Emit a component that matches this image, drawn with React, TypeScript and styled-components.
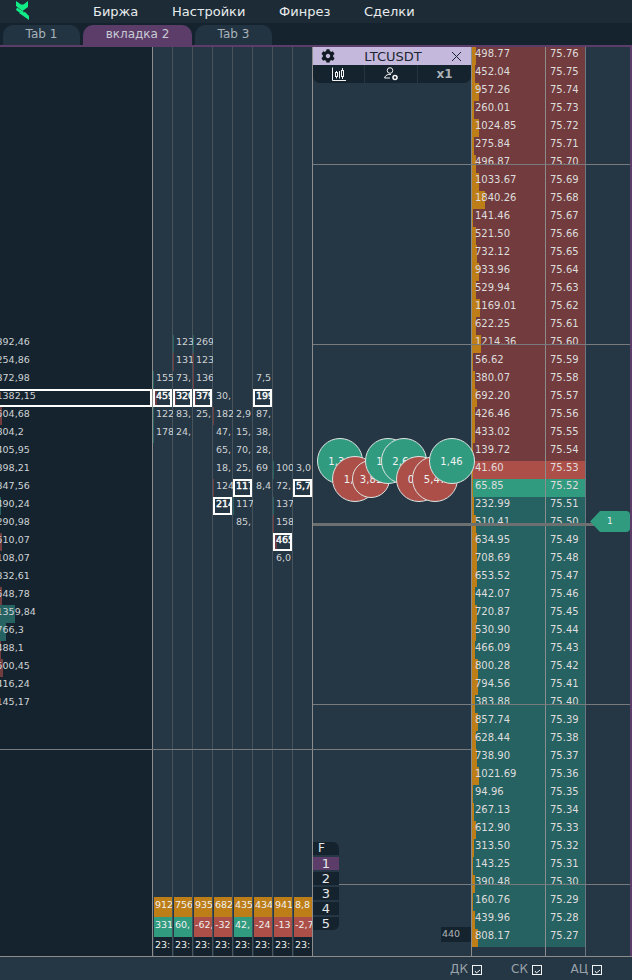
import React from "react";
import styled, { createGlobalStyle } from "styled-components";
import { FaCog } from "react-icons/fa";

const GlobalStyle = createGlobalStyle`
  html, body {
    margin: 0;
    padding: 0;
    background: #15232e;
    overflow: hidden;
  }
  * {
    box-sizing: border-box;
  }
`;

const RED = "#723c3f";
const TEAL = "#266262";
const HOT_RED = "#ad4f49";
const HOT_GREEN = "#319b80";
const ORANGE = "#bd7d17";
const PANEL = "#253644";
const DARK = "#15232e";
const PURPLE = "#5c3d6a";

const Screen = styled.div`
  width: 632px;
  height: 980px;
  display: flex;
  flex-direction: column;
  font-family: "DejaVu Sans", sans-serif;
  font-size: 10px;
  color: #cfd3d5;
`;

const TopBar = styled.div`
  height: 23px;
  flex: none;
  background: #1c2b36;
  display: flex;
  align-items: center;
  padding-left: 16px;
`;

const Logo = styled.svg`
  width: 13px;
  height: 19px;
  margin-right: 64px;
  margin-top: -2px;
`;

const MenuItem = styled.div<{ $w: number }>`
  width: ${(p) => p.$w}px;
  font-size: 13px;
  color: #e8ebed;
  white-space: nowrap;
`;

const TabStrip = styled.div`
  height: 24px;
  flex: none;
  background: ${DARK};
  border-bottom: 2px solid ${PURPLE};
  display: flex;
  gap: 3px;
  padding: 2px 0 0 3px;
`;

const Tab = styled.div<{ $active?: boolean; $w: number }>`
  width: ${(p) => p.$w}px;
  border-radius: 10px 10px 0 0;
  background: ${(p) => (p.$active ? PURPLE : "#223442")};
  color: ${(p) => (p.$active ? "#c8cbd4" : "#a9b2b9")};
  font-size: 12px;
  line-height: 18px;
  text-align: center;
`;

const Main = styled.div`
  position: relative;
  height: 909px;
  flex: none;
  display: flex;
  background: ${PANEL};
  border-right: 2px solid ${PURPLE};
  overflow: hidden;
`;

const LeftPanel = styled.div`
  width: 153px;
  flex: none;
  background: ${DARK};
  border-right: 1px solid #8c8c8c;
  padding-top: 288px;
  font-size: 9.5px;
  overflow: hidden;
`;

const LeftRow = styled.div<{ $boxed?: boolean }>`
  position: relative;
  height: 18px;
  line-height: 13px;
  text-indent: -3.5px;
  white-space: nowrap;
  ${(p) =>
    p.$boxed
      ? `
    border: 2px solid #fff;
    border-left: 0;
    line-height: 9px;
  `
      : ""}
`;

const LeftRowText = styled.span`
  position: relative;
`;

const LeftBar = styled.div<{ $w: number; $color: string }>`
  position: absolute;
  left: 0;
  top: 0;
  bottom: 0;
  width: ${(p) => p.$w}px;
  background: ${(p) => p.$color};
`;

const Column = styled.div<{ $last?: boolean }>`
  width: 20px;
  flex: none;
  display: flex;
  flex-direction: column;
  padding-top: 288px;
  font-size: 9.5px;
  border-right: 1px solid ${(p) => (p.$last ? "#8c8c8c" : "#47535d")};
`;

const Cell = styled.div<{ $boxed?: boolean }>`
  position: relative;
  height: 18px;
  flex: none;
  overflow: hidden;
  white-space: nowrap;
  padding-left: 3px;
  line-height: 13px;
  margin-right: -1px;
  ${(p) =>
    p.$boxed
      ? `
    border: 2px solid #fff;
    margin-right: 0;
    padding-left: 1px;
    line-height: 9px;
    color: #fff;
    -webkit-text-stroke: 0.4px #fff;
  `
      : ""}
`;

const CellText = styled.span`
  position: relative;
`;

const CellBar = styled.div<{ $w: number; $color: string }>`
  position: absolute;
  left: 0;
  top: 0;
  bottom: 0;
  width: ${(p) => p.$w}px;
  background: ${(p) => p.$color};
`;

const Summary = styled.div`
  margin-top: auto;
  display: flex;
  flex-direction: column;
  padding-left: 1px;
`;

const SummaryCell = styled.div<{ $bg: string; $h: number }>`
  height: ${(p) => p.$h}px;
  background: ${(p) => p.$bg};
  color: #eef0ee;
  line-height: 15px;
  padding-left: 1px;
  overflow: hidden;
  white-space: nowrap;
`;

const Middle = styled.div`
  width: 159px;
  flex: none;
  display: flex;
  flex-direction: column;
  border-right: 1px solid #8c8c8c;
`;

const Widget = styled.div`
  position: relative;
  z-index: 3;
`;

const WidgetTitle = styled.div`
  height: 18px;
  background: #c5b8dd;
  color: #1a2631;
  display: flex;
  align-items: center;
  justify-content: space-between;
  padding: 0 9px 0 8px;
  font-size: 13px;
`;

const WidgetTools = styled.div`
  height: 18px;
  background: ${DARK};
  border-radius: 0 0 7px 7px;
  display: flex;
`;

const Tool = styled.div<{ $w: number; $last?: boolean }>`
  width: ${(p) => p.$w}px;
  display: flex;
  align-items: center;
  justify-content: center;
  border-right: ${(p) => (p.$last ? "0" : "1px solid #26343f")};
  color: #aab0b5;
  font-size: 12px;
  font-weight: bold;
`;

const BottomRow = styled.div`
  margin-top: auto;
  display: flex;
  align-items: flex-end;
  justify-content: space-between;
  padding-bottom: 14px;
`;

const FilterList = styled.div`
  position: relative;
  z-index: 3;
  width: 26px;
  margin-bottom: 12px;
  display: flex;
  flex-direction: column;
  gap: 2px;
  font-size: 13px;
  color: #e4e7e9;
`;

const FilterItem = styled.div<{ $active?: boolean; $pos?: "top" | "bottom" }>`
  height: 13px;
  line-height: 13px;
  text-align: center;
  background: ${(p) => (p.$active ? PURPLE : DARK)};
  border-radius: ${(p) =>
    p.$pos === "top" ? "0 6px 0 0" : p.$pos === "bottom" ? "0 0 6px 0" : "0"};
`;

const FilterHead = styled(FilterItem)`
  text-align: left;
  padding-left: 5px;
  font-size: 12px;
`;

const VolumeTag = styled.div`
  width: 30px;
  height: 15px;
  background: ${DARK};
  color: #aeb4b8;
  font-size: 9.5px;
  line-height: 13px;
  padding-left: 1px;
`;

const Book = styled.div`
  width: 114px;
  flex: none;
  display: flex;
  border-right: 1px solid #6a7680;
`;

const BookColumn = styled.div<{ $w: number; $line?: boolean }>`
  width: ${(p) => p.$w}px;
  flex: none;
  border-right: ${(p) => (p.$line ? "1px solid #8c8c8c" : "0")};
`;

const BookCell = styled.div<{ $bg: string; $pad: number }>`
  position: relative;
  height: 18px;
  background: ${(p) => p.$bg};
  color: #dedcdc;
  line-height: 13px;
  padding-left: ${(p) => p.$pad}px;
  white-space: nowrap;
  overflow: hidden;
`;

const BookBar = styled.div`
  position: absolute;
  left: 0;
  top: 0;
  bottom: 0;
  background: ${ORANGE};
`;

const BookText = styled.span`
  position: relative;
`;

const HLine = styled.div<{ $top: number; $left: number; $right: number; $h?: number; $z?: number }>`
  position: absolute;
  top: ${(p) => p.$top}px;
  left: ${(p) => p.$left}px;
  right: ${(p) => p.$right}px;
  height: ${(p) => p.$h ?? 1}px;
  background: ${(p) => ((p.$h ?? 1) > 1 ? "#6d7070" : "#777b7e")};
  z-index: ${(p) => p.$z ?? 2};
`;

const Bubble = styled.div<{ $x: number; $y: number; $r: number; $green?: boolean }>`
  position: absolute;
  left: ${(p) => p.$x - p.$r}px;
  top: ${(p) => p.$y - p.$r}px;
  width: ${(p) => p.$r * 2}px;
  height: ${(p) => p.$r * 2}px;
  border-radius: 50%;
  border: 1px solid #dfe5e2;
  background: ${(p) => (p.$green ? HOT_GREEN : HOT_RED)};
  color: #eef2f0;
  display: flex;
  align-items: center;
  justify-content: center;
  z-index: 2;
`;

const PriceTag = styled.div`
  position: absolute;
  left: 590px;
  top: 464px;
  width: 40px;
  height: 21px;
  background: ${HOT_GREEN};
  clip-path: polygon(0 50%, 10px 0, 100% 0, 100% 100%, 10px 100%);
  border-radius: 0 4px 4px 0;
  color: #e6efec;
  font-size: 9px;
  line-height: 21px;
  padding-left: 17px;
  z-index: 3;
`;

const Footer = styled.div`
  flex: 1;
  background: ${PANEL};
  border-top: 1px solid #8c8c8c;
  display: flex;
  justify-content: flex-end;
  align-items: center;
  gap: 29px;
  padding-right: 30px;
`;

const Toggle = styled.div`
  width: 31px;
  display: flex;
  align-items: center;
  justify-content: flex-end;
  gap: 4px;
  font-size: 12px;
  color: #9aa3aa;
`;

const CheckBox = styled.span`
  width: 10px;
  height: 10px;
  flex: none;
  border: 1px solid #f0f2f3;
  display: block;
  margin-top: 2px;
`;

const CheckMark = styled.svg`
  display: block;
  width: 8px;
  height: 8px;
`;

type Mark = "r" | "t" | "r2" | "t2";
type ColCell = { v: string; box?: boolean; bar?: Mark } | null;

const barProps = (bar: Mark) => ({
  $w: bar === "r2" || bar === "t2" ? 2 : 1,
  $color: bar.startsWith("r") ? RED : TEAL,
});

const leftRows: { v: string; w?: number; c?: string; box?: boolean }[] = [
  { v: "392,46" },
  { v: "254,86" },
  { v: "372,98" },
  { v: "1382,15", box: true },
  { v: "504,68", w: 2, c: RED },
  { v: "804,2" },
  { v: "405,95" },
  { v: "398,21" },
  { v: "347,56" },
  { v: "490,24", w: 1, c: TEAL },
  { v: "290,98" },
  { v: "510,07", w: 2, c: RED },
  { v: "108,07" },
  { v: "332,61" },
  { v: "548,78", w: 2, c: RED },
  { v: "1359,84", w: 15, c: TEAL },
  { v: "766,3", w: 6, c: TEAL },
  { v: "488,1", w: 1, c: RED },
  { v: "500,45", w: 3, c: RED },
  { v: "416,24" },
  { v: "145,17" },
];

const columns: ColCell[][] = [
  [null, null, { v: "155", bar: "t" }, { v: "459,", box: true, bar: "r2" }, { v: "122", bar: "t" }, { v: "178", bar: "t" }],
  [{ v: "123", bar: "t" }, { v: "131", bar: "r" }, { v: "73," }, { v: "320,", box: true, bar: "r" }, { v: "83," }, { v: "24," }],
  [{ v: "269", bar: "t" }, { v: "123", bar: "r" }, { v: "136", bar: "r" }, { v: "379,", box: true, bar: "r" }, { v: "25," }],
  [null, null, null, { v: "30," }, { v: "182", bar: "r" }, { v: "47," }, { v: "65," }, { v: "18," }, { v: "124", bar: "r" }, { v: "214,", box: true }],
  [null, null, null, null, { v: "2,9" }, { v: "15," }, { v: "70," }, { v: "25," }, { v: "117,", box: true }, { v: "117", bar: "t" }, { v: "85," }],
  [null, null, { v: "7,5" }, { v: "199,", box: true }, { v: "87," }, { v: "38," }, { v: "28," }, { v: "69" }, { v: "8,4" }],
  [null, null, null, null, null, null, null, { v: "100", bar: "t" }, { v: "72," }, { v: "137", bar: "t" }, { v: "158", bar: "r" }, { v: "465,", box: true, bar: "r2" }, { v: "6,0" }],
  [null, null, null, null, null, null, null, { v: "3,0" }, { v: "5,7", box: true }],
];

const summaries: { top: string; mid: string; up: boolean }[] = [
  { top: "912", mid: "331", up: true },
  { top: "756", mid: "60,", up: true },
  { top: "935", mid: "-62,", up: false },
  { top: "682", mid: "-32", up: false },
  { top: "435", mid: "42,", up: true },
  { top: "434", mid: "-24", up: false },
  { top: "941", mid: "-13", up: false },
  { top: "8,8", mid: "-2,7", up: false },
];

const volumes = [
  498.77, 452.04, 957.26, 260.01, 1024.85, 275.84, 496.87, 1033.67, 1840.26, 141.46,
  521.5, 732.12, 933.96, 529.94, 1169.01, 622.25, 1214.36, 56.62, 380.07, 692.2,
  426.46, 433.02, 139.72, 41.6, 65.85, 232.99, 510.41, 634.95, 708.69, 653.52,
  442.07, 720.87, 530.9, 466.09, 800.28, 794.56, 383.88, 857.74, 628.44, 738.9,
  1021.69, 94.96, 267.13, 612.9, 313.5, 143.25, 390.48, 160.76, 439.96, 808.17,
];

const bubbles = [
  { x: 26.5, y: 414, r: 23, v: "1,34", green: true },
  { x: 42, y: 432, r: 23, v: "1,52" },
  { x: 58, y: 432, r: 19, v: "3,81" },
  { x: 74.5, y: 414, r: 23, v: "1,27", green: true },
  { x: 90.5, y: 414, r: 23, v: "2,64", green: true },
  { x: 106, y: 432, r: 23, v: "0,93" },
  { x: 122, y: 432, r: 23, v: "5,47" },
  { x: 138.5, y: 414, r: 23, v: "1,46", green: true },
];

const rowColor = (i: number) => {
  if (i < 23) return RED;
  if (i === 23) return HOT_RED;
  if (i === 24) return HOT_GREEN;
  return TEAL;
};

const App = () => {
  return (
    <Screen>
      <GlobalStyle />
      <TopBar>
        <Logo viewBox="0 0 13 19">
          <path fill="#12ec87" d="M0 0 L5 3.5 L7.5 3.5 L12 0 L12 6 L6.5 10 L0 5 Z" />
          <path fill="#12ec87" d="M1 6.5 L8 11 L5.5 13 L0 9 Z" />
          <path fill="#12ec87" d="M3 12 L9 11 L13 15 L13 19 L8 15.5 Z" />
        </Logo>
        <MenuItem $w={79}>Биржа</MenuItem>
        <MenuItem $w={107}>Настройки</MenuItem>
        <MenuItem $w={85}>Финрез</MenuItem>
        <MenuItem $w={60}>Сделки</MenuItem>
      </TopBar>
      <TabStrip>
        <Tab $w={77}>Tab 1</Tab>
        <Tab $w={109} $active>
          вкладка 2
        </Tab>
        <Tab $w={77}>Tab 3</Tab>
      </TabStrip>
      <Main>
        <LeftPanel>
          {leftRows.map((r) => (
            <LeftRow key={r.v} $boxed={r.box}>
              {r.w && r.c ? <LeftBar $w={r.w} $color={r.c} /> : null}
              <LeftRowText>{r.v}</LeftRowText>
            </LeftRow>
          ))}
        </LeftPanel>
        {columns.map((cells, c) => (
          <Column key={c} $last={c === columns.length - 1}>
            {cells.map((cell, i) => (
              <Cell key={i} $boxed={cell?.box}>
                {cell?.bar ? <CellBar {...barProps(cell.bar)} /> : null}
                {cell ? <CellText>{cell.v}</CellText> : null}
              </Cell>
            ))}
            <Summary>
              <SummaryCell $bg={ORANGE} $h={20}>
                {summaries[c].top}
              </SummaryCell>
              <SummaryCell $bg={summaries[c].up ? HOT_GREEN : HOT_RED} $h={20}>
                {summaries[c].mid}
              </SummaryCell>
              <SummaryCell $bg={DARK} $h={19}>
                23:
              </SummaryCell>
            </Summary>
          </Column>
        ))}
        <Middle>
          <Widget>
            <WidgetTitle>
              <FaCog size={14} color="#111a22" />
              <span>LTCUSDT</span>
              <svg width="11" height="11" viewBox="0 0 11 11">
                <path d="M1 1 L10 10 M10 1 L1 10" stroke="#1a2631" strokeWidth="1" />
              </svg>
            </WidgetTitle>
            <WidgetTools>
              <Tool $w={52}>
                <svg width="14" height="14" viewBox="0 0 14 14" fill="none" stroke="#f0f2f3" strokeWidth="1">
                  <path d="M0.5 0.5 V13.5 H14" />
                  <path d="M4.5 4 V5.5 M4.5 9.5 V11.5 M7.5 4 V11.5 M10.5 1 V3.5 M10.5 9.5 V12" />
                  <rect x="3.5" y="5.5" width="2" height="4" />
                  <rect x="9.5" y="3.5" width="2" height="6" />
                </svg>
              </Tool>
              <Tool $w={53}>
                <svg width="15" height="14" viewBox="0 0 15 14" fill="none" stroke="#f0f2f3" strokeWidth="1">
                  <circle cx="6" cy="3.5" r="2.8" />
                  <path d="M0.5 11 C1.5 8 4 7 7 7.5 M0.5 11 H6" />
                  <circle cx="11" cy="10.5" r="2" strokeWidth="1.6" />
                </svg>
              </Tool>
              <Tool $w={53} $last>
                x1
              </Tool>
            </WidgetTools>
          </Widget>
          <BottomRow>
            <FilterList>
              <FilterHead $pos="top">F</FilterHead>
              <FilterItem $active>1</FilterItem>
              <FilterItem>2</FilterItem>
              <FilterItem>3</FilterItem>
              <FilterItem>4</FilterItem>
              <FilterItem $pos="bottom">5</FilterItem>
            </FilterList>
            <VolumeTag>440</VolumeTag>
          </BottomRow>
        </Middle>
        <Book>
          <BookColumn $w={74} $line>
            {volumes.map((v, i) => (
              <BookCell key={i} $bg={rowColor(i)} $pad={3}>
                <BookBar style={{ width: v / 140 }} />
                <BookText>{v.toFixed(2)}</BookText>
              </BookCell>
            ))}
          </BookColumn>
          <BookColumn $w={39}>
            {volumes.map((_, i) => (
              <BookCell key={i} $bg={rowColor(i)} $pad={4}>
                {(75.76 - i * 0.01).toFixed(2)}
              </BookCell>
            ))}
          </BookColumn>
        </Book>

        <HLine $top={702} $left={0} $right={159} $z={1} />
        {[117, 297, 657, 837].map((top) => (
          <HLine key={top} $top={top} $left={313} $right={0} />
        ))}
        <HLine $top={476} $left={313} $right={36} $h={3} />
        {bubbles.map((b) => (
          <Bubble key={b.v} $x={313 + b.x} $y={b.y} $r={b.r} $green={b.green}>
            {b.v}
          </Bubble>
        ))}
        <PriceTag>1</PriceTag>
      </Main>
      <Footer>
        {["ДК", "СК", "АЦ"].map((label) => (
          <Toggle key={label}>
            {label}
            <CheckBox>
              <CheckMark viewBox="0 0 8 8">
                <path d="M2 5 L3.5 7 L7 4" fill="none" stroke="#f0f2f3" strokeWidth="1" />
              </CheckMark>
            </CheckBox>
          </Toggle>
        ))}
      </Footer>
    </Screen>
  );
};

export default App;
